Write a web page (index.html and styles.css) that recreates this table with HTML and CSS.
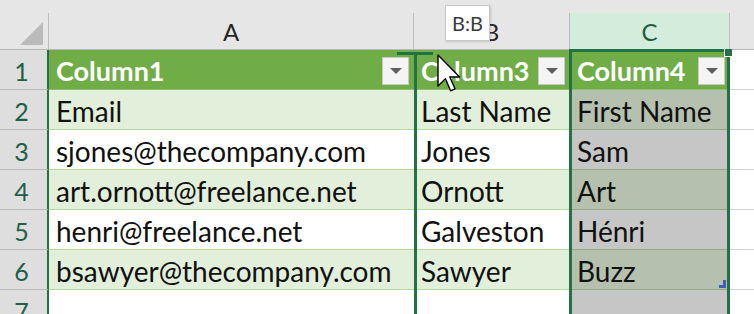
FILE: index.html
```html
<!DOCTYPE html>
<html>
<head>
<meta charset="utf-8">
<link rel="stylesheet" href="styles.css">
</head>
<body>
<div class="sheet">
  <div class="hcell corner"><div class="hin"><span class="tri"></span></div></div>
  <div class="hcell"><div class="hin">A</div></div>
  <div class="hcell"><div class="hin">B</div></div>
  <div class="hcell"><div class="hin sel">C</div></div>
  <div class="hcell"><div class="hin last"></div></div>

  <div class="rh">1</div>
  <div class="cell th">Column1<span class="fbtn"></span></div>
  <div class="cell th">Column3<span class="fbtn"></span></div>
  <div class="cell th">Column4<span class="fbtn"></span></div>
  <div class="cell out"></div>

  <div class="rh">2</div>
  <div class="cell band">Email</div>
  <div class="cell band">Last Name</div>
  <div class="cell sband">First Name</div>
  <div class="cell out"></div>

  <div class="rh">3</div>
  <div class="cell plain">sjones@thecompany.com</div>
  <div class="cell plain">Jones</div>
  <div class="cell splain">Sam</div>
  <div class="cell out"></div>

  <div class="rh">4</div>
  <div class="cell band">art.ornott@freelance.net</div>
  <div class="cell band">Ornott</div>
  <div class="cell sband">Art</div>
  <div class="cell out"></div>

  <div class="rh">5</div>
  <div class="cell plain">henri@freelance.net</div>
  <div class="cell plain">Galveston</div>
  <div class="cell splain">Hénri</div>
  <div class="cell out"></div>

  <div class="rh">6</div>
  <div class="cell band">bsawyer@thecompany.com</div>
  <div class="cell band">Sawyer</div>
  <div class="cell sband">Buzz<svg class="handle" width="7" height="8" viewBox="0 0 7 8"><path d="M4 0H7V8H0V5H4Z" fill="#3f5fbf"/></svg></div>
  <div class="cell out"></div>

  <div class="rh">7</div>
  <div class="cell empty"></div>
  <div class="cell empty"></div>
  <div class="cell sempty"></div>
  <div class="cell out"></div>
</div>

<div class="selbox"><span class="corner-sq"></span></div>
<div class="ibeam"><span class="cap"></span></div>
<div class="tip">B:B</div>
<svg class="cursor" width="24" height="38" viewBox="0 0 12 19">
  <path d="M0.5 0.5 L0.5 16 L4.2 12.4 L6.8 18.4 L9 17.4 L6.4 11.5 L11.3 11.5 Z" fill="#fff" stroke="#000" stroke-width="0.7" stroke-linejoin="round"/>
</svg>
</body>
</html>
```

FILE: styles.css
```css
html, body {
  margin: 0;
  padding: 0;
  background: #ffffff;
  width: 754px;
  height: 314px;
  overflow: hidden;
}

.sheet {
  display: grid;
  grid-template-columns: 49px 365px 156px 160px 24px;
  grid-template-rows: 50px repeat(7, 40px);
  font-family: Lato, "Liberation Sans", sans-serif;
  font-size: 28px;
  color: #111;
}

.hcell {
  background: #e6e6e6;
  display: flex;
  align-items: flex-end;
  border-bottom: 1px solid #b8b8b8;
  box-sizing: border-box;
}

.hin {
  flex: 1;
  height: 36px;
  border-right: 1px solid #bdbdbd;
  display: flex;
  align-items: center;
  justify-content: center;
  font-size: 24px;
  color: #262626;
  box-sizing: border-box;
}

.hin.sel {
  background: #d3ecdc;
  color: #1d5f40;
}

.hin.last {
  border-right: none;
}

.corner .hin {
  position: relative;
  justify-content: flex-end;
  align-items: flex-end;
  padding: 0 5px 4px 0;
}

.tri {
  width: 0;
  height: 0;
  border-left: 23px solid transparent;
  border-bottom: 23px solid #bababa;
}

.rh {
  background: #dedede;
  border-bottom: 1px solid #bdbdbd;
  border-right: 2px solid #217346;
  box-sizing: border-box;
  display: flex;
  align-items: center;
  justify-content: center;
  padding-right: 4px;
  padding-top: 2px;
  font-size: 25px;
  color: #1f5f4a;
}

.cell {
  box-sizing: border-box;
  display: flex;
  align-items: center;
  padding-left: 7px;
  padding-top: 3px;
  white-space: nowrap;
  overflow: hidden;
  position: relative;
}

.th {
  background: #70ad47;
  color: #ffffff;
  font-weight: bold;
  font-size: 27px;
  justify-content: space-between;
  padding-right: 5px;
  padding-top: 2px;
  border-bottom: 1px solid #8fbf6c;
}

.fbtn {
  width: 27px;
  height: 28px;
  box-sizing: border-box;
  background: #f4f4f4;
  border: 1px solid #c8c8c8;
  display: flex;
  align-items: center;
  justify-content: center;
  flex: none;
}

.fbtn::after {
  content: "";
  width: 0;
  height: 0;
  border-left: 6px solid transparent;
  border-right: 6px solid transparent;
  border-top: 6px solid #5f5f5f;
}

.band {
  background: #e2efda;
  border-bottom: 1px solid #b9d9a3;
}

.plain {
  background: #ffffff;
  border-bottom: 1px solid #b9d9a3;
}

.sband {
  background: #b5c1ae;
  border-bottom: 1px solid #93ad82;
}

.splain {
  background: #c6c6c6;
  border-bottom: 1px solid #93ad82;
}

.empty {
  background: #ffffff;
}

.sempty {
  background: #c6c6c6;
}

.out {
  background: #ffffff;
  border-bottom: 1px solid #d4d4d4;
  padding-left: 0;
}

.handle {
  position: absolute;
  right: 4px;
  bottom: 1px;
}

.selbox {
  position: absolute;
  left: 569px;
  top: 49px;
  width: 161px;
  height: 300px;
  box-sizing: border-box;
  border: 3px solid #217346;
  border-bottom: none;
}

.corner-sq {
  position: absolute;
  right: -5px;
  top: -3px;
  width: 7px;
  height: 7px;
  background: #217346;
  border-left: 1px solid #fff;
  border-bottom: 1px solid #fff;
}

.ibeam {
  position: absolute;
  left: 414px;
  top: 52px;
  width: 3px;
  height: 270px;
  background: #217346;
}

.cap {
  position: absolute;
  left: -17px;
  top: 0;
  width: 36px;
  height: 3px;
  background: #217346;
}

.tip {
  position: absolute;
  left: 445px;
  top: 5px;
  width: 45px;
  height: 36px;
  box-sizing: border-box;
  background: #ffffff;
  border: 1px solid #c9c9c9;
  box-shadow: 1px 1px 2px rgba(0,0,0,0.15);
  font-family: Lato, "Liberation Sans", sans-serif;
  font-size: 20px;
  color: #3a3a3a;
  display: flex;
  align-items: center;
  justify-content: center;
}

.cursor {
  position: absolute;
  left: 437px;
  top: 54px;
}
```
